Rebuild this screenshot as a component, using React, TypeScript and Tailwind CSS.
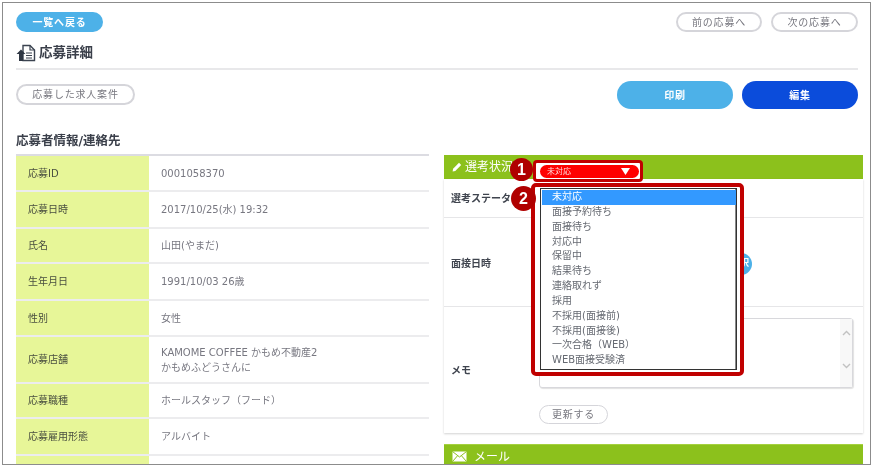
const FONT = "font-['DejaVu_Sans','Noto_Sans_CJK_JP',sans-serif]";

const rows: { label: string; value: string[]; h: string }[] = [
  { label: "応募ID", value: ["0001058370"], h: "h-[34px]" },
  { label: "応募日時", value: ["2017/10/25(水) 19:32"], h: "h-[35px]" },
  { label: "氏名", value: ["山田(やまだ)"], h: "h-[33px]" },
  { label: "生年月日", value: ["1991/10/03 26歳"], h: "h-[35px]" },
  { label: "性別", value: ["女性"], h: "h-[34px]" },
  { label: "応募店舗", value: ["KAMOME COFFEE かもめ不動産2", "かもめふどうさんに"], h: "h-[45px]" },
  { label: "応募職種", value: ["ホールスタッフ（フード）"], h: "h-[33px]" },
  { label: "応募雇用形態", value: ["アルバイト"], h: "h-[35px]" },
  { label: "", value: [""], h: "h-[35px]" },
];

const options = [
  "未対応",
  "面接予約待ち",
  "面接待ち",
  "対応中",
  "保留中",
  "結果待ち",
  "連絡取れず",
  "採用",
  "不採用(面接前)",
  "不採用(面接後)",
  "一次合格（WEB）",
  "WEB面接受験済",
];

function PillOutline({ children, className }: { children: React.ReactNode; className: string }) {
  return (
    <button className={`flex items-center justify-center rounded-full border-2 border-[#d5d5da] bg-white text-[10px] tracking-[0.8px] text-[#77777f] ${className}`}>
      {children}
    </button>
  );
}

function Badge({ n, className }: { n: string; className: string }) {
  return (
    <div className={`absolute flex items-center justify-center rounded-full bg-[#b00000] font-['Liberation_Sans',sans-serif] text-[16px] font-bold text-white ${className}`}>
      {n}
    </div>
  );
}

export default function App() {
  return (
    <div className={`relative h-[470px] w-[876px] overflow-hidden bg-white ${FONT}`}>
      <div className="relative ml-[2px] mt-[2px] h-[463px] w-[869px] overflow-hidden border border-[#8c8c8c] bg-white blur-[0.35px]">
        <div className="pl-[13px] pr-[12px] pt-[9px]">
          <div className="flex items-center justify-between">
            <button className="flex h-[20px] w-[87px] items-center justify-center rounded-full bg-[#4db1e8] text-[10px] font-semibold tracking-[0.8px] text-white">
              一覧へ戻る
            </button>
            <div className="flex gap-[9px]">
              <PillOutline className="h-[20px] w-[86px]">前の応募へ</PillOutline>
              <PillOutline className="h-[20px] w-[87px]">次の応募へ</PillOutline>
            </div>
          </div>

          <div className="mt-[11px] flex h-[27px] items-center gap-[3px] border-b-2 border-[#e8e8ea] pb-[5px] pr-0">
            <svg width="20" height="18" viewBox="0 0 20 18" className="shrink-0">
              <path d="M7 1.5h7l4.5 4.5v10.5H7z" fill="white" stroke="#3b4350" strokeWidth="1.4" />
              <path d="M14 1.5V6h4.5" fill="none" stroke="#3b4350" strokeWidth="1.2" />
              <path d="M10 9h6M10 11.5h6M10 14h6" stroke="#3b4350" strokeWidth="1.1" />
              <path d="M5 5.5 0.5 10H3v7h4v-7h2.5z" fill="#2f3744" />
            </svg>
            <h1 className="text-[13.5px] font-bold leading-none text-[#3a3f4a]">応募詳細</h1>
          </div>

          <div className="mt-[11px] flex items-start justify-between">
            <PillOutline className="mt-[3px] h-[21px] w-[119px]">応募した求人案件</PillOutline>
            <div className="flex gap-[9px]">
              <button className="flex h-[28px] w-[116px] items-center justify-center rounded-full bg-[#4db1e8] text-[10px] font-semibold tracking-[0.8px] text-white">
                印刷
              </button>
              <button className="flex h-[28px] w-[116px] items-center justify-center rounded-full bg-[#0b4cdb] text-[10px] font-semibold tracking-[0.8px] text-white">
                編集
              </button>
            </div>
          </div>

          <div className="mt-[22px] flex items-start gap-[15px]">
            <section className="w-[413px] shrink-0">
              <h2 className="h-[23px] text-[12.5px] font-bold leading-[20px] text-[#3a3f4a]">応募者情報/連絡先</h2>
              <div className="border-t-2 border-[#dcdce2]">
                {rows.map((r, i) => (
                  <div key={i} className="flex border-b-2 border-[#ececee]">
                    <div className={`flex w-[133px] items-center bg-[#e7f698] pl-[12px] text-[10px] text-[#4a4f40] ${r.h}`}>
                      {r.label}
                    </div>
                    <div className={`flex flex-col justify-center pl-[12px] text-[10px] leading-[15px] text-[#777780] ${r.h}`}>
                      {r.value.map((v) => (
                        <div key={v}>{v}</div>
                      ))}
                    </div>
                  </div>
                ))}
              </div>
            </section>

            <section className="mt-[24px] w-[419px] shrink-0">
              <div className="flex h-[24px] items-center gap-[3px] bg-[#8cc11c] pl-[8px] text-[12px] text-white">
                <svg width="10" height="10" viewBox="0 0 10 10">
                  <path d="M7 .8 9.2 3 3.3 8.9.6 9.4 1.1 6.7z" fill="white" />
                </svg>
                選考状況
              </div>
              <div className="shadow-[0_1px_2px_rgba(0,0,0,0.18)]">
                <div className="flex h-[39px] items-center border-b border-[#e6e6e8] pl-[7px] text-[10px] font-semibold text-[#3f444e]">
                  選考ステータス
                </div>
                <div className="relative flex h-[89px] items-center border-b border-[#e6e6e8] pb-0 pl-[7px] pt-[2px] text-[10px] font-semibold text-[#3f444e]">
                  面接日時
                  <span className="absolute left-[292px] top-[35px] flex h-[22px] w-[16px] items-center justify-end rounded-r-full bg-[#4db1e8] pr-[3px] text-[9px] text-white">
                    択
                  </span>
                </div>
                <div className="flex h-[126px] pl-[7px] pt-[11px]">
                  <div className="flex h-[70px] w-[88px] shrink-0 items-center pt-[34px] text-[10px] font-semibold text-[#3f444e]">メモ</div>
                  <div>
                    <div className="flex h-[70px] w-[314px] justify-end rounded-[3px] border border-[#d8d8dc] bg-white shadow-[1px_1px_1px_rgba(0,0,0,0.12)]">
                      <div className="flex w-[12px] flex-col items-center justify-between bg-[#f8f8f8] py-[11px]">
                        <svg width="9" height="6" viewBox="0 0 9 6">
                          <path d="M1 5 4.5 1.5 8 5" fill="none" stroke="#c2c2c2" strokeWidth="1.4" />
                        </svg>
                        <svg width="9" height="6" viewBox="0 0 9 6" className="mb-[7px]">
                          <path d="M1 1l3.5 3.5L8 1" fill="none" stroke="#c2c2c2" strokeWidth="1.4" />
                        </svg>
                      </div>
                    </div>
                    <PillOutline className="mt-[17px] h-[19px] w-[69px] !border">更新する</PillOutline>
                  </div>
                </div>
              </div>
              <div className="mt-[11px] flex h-[24px] items-center gap-[7px] border-t border-[#a5d13f] bg-[#8cc11c] pl-[8px] text-[12px] text-white">
                <svg width="15" height="11" viewBox="0 0 15 11">
                  <rect x="0.5" y="0.5" width="14" height="10" fill="white" />
                  <path d="M0.5 0.5 7.5 6l7-5.5M0.5 10.5 5.5 4.8M14.5 10.5 9.5 4.8" fill="none" stroke="#8cc11c" strokeWidth="1" />
                </svg>
                メール
              </div>
            </section>
          </div>
        </div>

        <div className="absolute left-[530px] top-[157px] h-[22px] w-[110px] rounded-[4px] border-[3px] border-[#c00000] bg-white" />
        <div className="absolute left-[537px] top-[162px] flex h-[13px] w-[99px] items-center justify-between rounded-full bg-[#ff0000] pl-[7px] pr-[9px] text-[8px] text-[#ffd9d9]">
          未対応
          <svg width="9" height="7" viewBox="0 0 9 7">
            <path d="M0 0h9L4.5 7z" fill="white" />
          </svg>
        </div>

        <div className="absolute left-[528px] top-[180px] h-[193px] w-[213px] rounded-[5px] border-[4px] border-[#c00000] bg-white" />
        <ul className="absolute left-[537px] top-[185px] h-[182px] w-[197px] border border-[#333] bg-white pl-px pt-px text-[10px] leading-[14.85px] text-[#666a72] shadow-[inset_-1px_0_0_#888]">
          {options.map((o, i) => (
            <li key={o} className={i === 0 ? "bg-[#3399ff] pl-[10px] text-white" : "pl-[10px]"}>
              {o}
            </li>
          ))}
        </ul>

        <Badge n="1" className="left-[507px] top-[155px] h-[23px] w-[23px]" />
        <Badge n="2" className="left-[508px] top-[183px] h-[25px] w-[25px]" />
      </div>
    </div>
  );
}
